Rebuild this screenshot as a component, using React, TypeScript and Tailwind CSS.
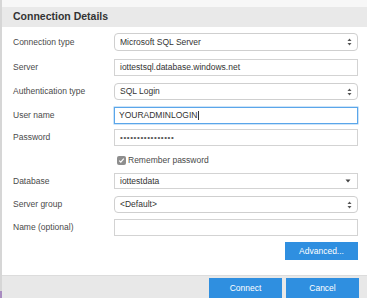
import React from "react";

const font = { fontFamily: '"Liberation Sans", Arial, sans-serif' };

function UpDown() {
  return (
    <svg width="5" height="8" viewBox="0 0 5 8" className="shrink-0">
      <path d="M2.5 0.5 L4.5 3 H0.5 Z" fill="#555" />
      <path d="M2.5 7.5 L4.5 5 H0.5 Z" fill="#555" />
    </svg>
  );
}

function Label({ children }: { children: React.ReactNode }) {
  return (
    <span className="w-[101px] shrink-0 text-[8.5px] text-[#4a4a4a]">
      {children}
    </span>
  );
}

function Row({
  top,
  h,
  label,
  children,
}: {
  top: string;
  h: string;
  label?: string;
  children: React.ReactNode;
}) {
  return (
    <div className={`flex items-center ${top} ${h}`}>
      <Label>{label}</Label>
      <div className="flex h-full flex-1">{children}</div>
    </div>
  );
}

export default function App() {
  return (
    <div className="flex h-[298px] w-[367px] overflow-hidden bg-white" style={font}>
      <div className="flex w-[2px] shrink-0 flex-col bg-[#d6d6d6]">
        <div className="flex-1" />
        <div className="h-[7px] bg-[#a88bc0]" />
      </div>
      <div className="flex flex-1 flex-col">
        <div className="h-[7px] bg-[#f7f7f7]" />
        <div className="flex h-[20px] items-center bg-[#e9e9e9] pl-[11px]">
          <span className="text-[10.5px] font-bold text-[#333]">Connection Details</span>
        </div>

        <div className="flex flex-1 flex-col pl-[11px] pr-[9px]">
          <Row top="mt-[6px]" h="h-[18px]" label="Connection type">
            <div className="flex flex-1 items-center justify-between rounded-[4px] border border-[#cfcfcf] bg-white pl-[5px] pr-[5px] text-[8.5px] text-[#333]">
              <span>Microsoft SQL Server</span>
              <UpDown />
            </div>
          </Row>
          <Row top="mt-[8px]" h="h-[17px]" label="Server">
            <div className="flex flex-1 items-center border border-[#d3d3d3] bg-white pl-[5px] text-[8.5px] text-[#333]">
              iottestsql.database.windows.net
            </div>
          </Row>
          <Row top="mt-[7px]" h="h-[17px]" label="Authentication type">
            <div className="flex flex-1 items-center justify-between rounded-[4px] border border-[#cfcfcf] bg-white pl-[5px] pr-[5px] text-[8.5px] text-[#333]">
              <span>SQL Login</span>
              <UpDown />
            </div>
          </Row>
          <Row top="mt-[7px]" h="h-[17px]" label="User name">
            <div className="flex flex-1 items-center border border-[#5aa6ea] bg-white pl-[4px] text-[8.5px] text-[#333] shadow-[0_0_0_0.5px_#9cc9f1]">
              <span>YOURADMINLOGIN</span>
              <span className="ml-[1px] h-[9px] w-px bg-[#333]" />
            </div>
          </Row>
          <Row top="mt-[5px]" h="h-[17px]" label="Password">
            <div className="flex flex-1 items-center border border-[#d3d3d3] bg-white pl-[5px] text-[8px] tracking-[0.6px] text-[#555]">
              ••••••••••••••••
            </div>
          </Row>
          <div className="mt-[9px] flex h-[10px] items-center">
            <span className="w-[104px] shrink-0" />
            <span className="flex h-[9px] w-[9px] items-center justify-center rounded-[2px] bg-[#8e8e8e]">
              <svg width="7" height="7" viewBox="0 0 7 7">
                <path d="M1.2 3.6 L2.8 5.2 L5.8 1.6" stroke="#fff" strokeWidth="1.2" fill="none" />
              </svg>
            </span>
            <span className="ml-[2px] text-[8.5px] text-[#4a4a4a]">Remember password</span>
          </div>
          <Row top="mt-[8px]" h="h-[16px]" label="Database">
            <div className="flex flex-1 items-center justify-between border border-[#d3d3d3] bg-white pl-[5px] pr-[6px] text-[8.5px] text-[#333]">
              <span>iottestdata</span>
              <svg width="6" height="4" viewBox="0 0 6 4">
                <path d="M0.5 0.5 H5.5 L3 3.5 Z" fill="#444" />
              </svg>
            </div>
          </Row>
          <Row top="mt-[7px]" h="h-[17px]" label="Server group">
            <div className="flex flex-1 items-center justify-between rounded-[4px] border border-[#cfcfcf] bg-white pl-[5px] pr-[5px] text-[8.5px] text-[#333]">
              <span>&lt;Default&gt;</span>
              <UpDown />
            </div>
          </Row>
          <Row top="mt-[6px]" h="h-[17px]" label="Name (optional)">
            <div className="flex-1 border border-[#d3d3d3] bg-white" />
          </Row>
          <div className="mt-[6px] flex justify-end">
            <button className="flex h-[18px] w-[73px] items-center justify-center bg-[#2f8fe0] text-[8.5px] text-white">
              Advanced...
            </button>
          </div>
        </div>

        <div className="flex h-[23px] items-start justify-end gap-[4px] border-t border-[#dcdcdc] bg-[#e8e8e8] pr-[8px] pt-[2px]">
          <button className="flex h-[20px] w-[73px] items-center justify-center bg-[#2f8fe0] text-[8.5px] text-white">
            Connect
          </button>
          <button className="flex h-[20px] w-[73px] items-center justify-center bg-[#2f8fe0] text-[8.5px] text-white">
            Cancel
          </button>
        </div>
      </div>
    </div>
  );
}
